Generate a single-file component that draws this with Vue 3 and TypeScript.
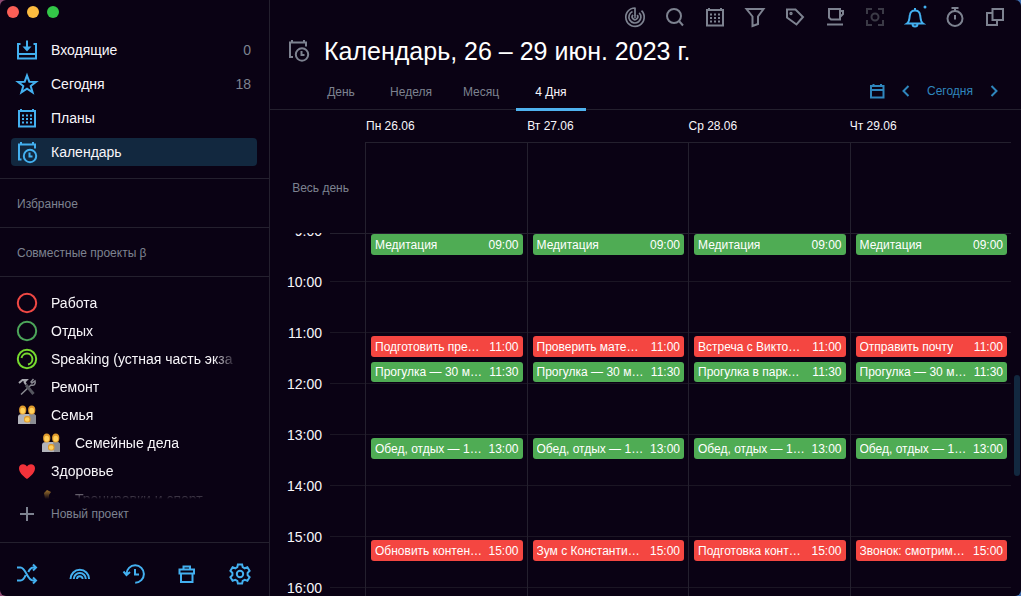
<script setup lang="ts">
import { ref } from 'vue'

interface NavItem { id: string; label: string; count?: string }
interface Project { id: string; label: string; icon: string; nested?: boolean }
interface CalEvent { slot: number; title: string; time: string; tone: 'green' | 'red' }
interface Day { label: string; events: CalEvent[] }

const nav: NavItem[] = [
  { id: 'inbox', label: 'Входящие', count: '0' },
  { id: 'star', label: 'Сегодня', count: '18' },
  { id: 'plans', label: 'Планы' },
  { id: 'clock', label: 'Календарь' },
]
const projects: Project[] = [
  { id: 'work', label: 'Работа', icon: 'ring-red' },
  { id: 'rest', label: 'Отдых', icon: 'ring-green' },
  { id: 'speaking', label: 'Speaking (устная часть экза', icon: 'ring-lime' },
  { id: 'repair', label: 'Ремонт', icon: 'tools' },
  { id: 'family', label: 'Семья', icon: 'family' },
  { id: 'chores', label: 'Семейные дела', icon: 'family', nested: true },
  { id: 'health', label: 'Здоровье', icon: 'heart' },
  { id: 'sport', label: 'Тренировки и спорт', icon: 'arm', nested: true },
]
const tools = ['Фокус', 'Поиск', 'Планы', 'Фильтр', 'Метки', 'Перерыв', 'Обзор', 'Уведомления', 'Таймер', 'Окна']
const footer = ['Случайная задача', 'Радуга', 'История', 'Корзина', 'Настройки']
const tabs = ['День', 'Неделя', 'Месяц', '4 Дня']
const hours = ['9:00', '10:00', '11:00', '12:00', '13:00', '14:00', '15:00', '16:00']
const activeNav = ref('clock')
const activeTab = ref('4 Дня')

function day(label: string, late: string, walk: string, last: string): Day {
  return {
    label,
    events: [
      { slot: 1, title: 'Медитация', time: '09:00', tone: 'green' },
      { slot: 5, title: late, time: '11:00', tone: 'red' },
      { slot: 6, title: walk, time: '11:30', tone: 'green' },
      { slot: 9, title: 'Обед, отдых — 1…', time: '13:00', tone: 'green' },
      { slot: 13, title: last, time: '15:00', tone: 'red' },
    ],
  }
}
const days: Day[] = [
  day('Пн 26.06', 'Подготовить пре…', 'Прогулка — 30 м…', 'Обновить контен…'),
  day('Вт 27.06', 'Проверить мате…', 'Прогулка — 30 м…', 'Зум с Константи…'),
  day('Ср 28.06', 'Встреча с Викто…', 'Прогулка в парк…', 'Подготовка конт…'),
  day('Чт 29.06', 'Отправить почту', 'Прогулка — 30 м…', 'Звонок: смотрим…'),
]
</script>

<template>
  <div class="window">
    <aside class="sidebar">
      <div class="lights">
        <button class="light close" aria-label="Закрыть"></button>
        <button class="light minimize" aria-label="Свернуть"></button>
        <button class="light expand" aria-label="Развернуть"></button>
      </div>

      <nav class="nav">
        <a v-for="item in nav" :key="item.id" href="#" class="nav-item" :class="{ active: item.id === activeNav }" @click.prevent="activeNav = item.id">
          <svg class="icon" viewBox="0 0 22 22">
            <g v-if="item.id === 'inbox'">
              <path d="M4.500 5H2v14.500h18V5h-2.500M2 15h18M11 1.500v9" />
              <path class="solid" d="M6.500 7.500h9L11 12.500z" />
            </g>
            <path v-else-if="item.id === 'star'" d="m11 2.500 2.300 6.200 6.700.2-5.300 4.100 1.900 6.400L11 15.600l-5.600 3.800 1.900-6.400L2 8.900l6.700-.2z" />
            <g v-else-if="item.id === 'plans'">
              <path d="M3 4h16v15.500H3zM5 2V4M17 2V4" />
              <path class="dots" d="M6 8.500h10.500M6 12h10.500M6 15.500h10.500" />
            </g>
            <g v-else>
              <path d="M5.500 18.500H3V3.500h16v4M5 1V3.500M17 1V3.500" />
              <circle cx="14" cy="15" r="6.200" />
              <path d="M13.500 11.500v4h3" />
            </g>
          </svg>
          <span class="nav-label">{{ item.label }}</span>
          <span v-if="item.count" class="count">{{ item.count }}</span>
        </a>
      </nav>

      <section class="group">Избранное</section>
      <section class="group">Совместные проекты β</section>

      <div class="projects">
        <a v-for="p in projects" :key="p.id" href="#" class="project" :class="{ nested: p.nested }">
          <svg class="icon" viewBox="0 0 22 22">
            <circle v-if="p.icon === 'ring-red'" cx="11" cy="11" r="9.200" stroke="#f04844" />
            <circle v-else-if="p.icon === 'ring-green'" cx="11" cy="11" r="9.200" stroke="#4ca55a" />
            <g v-else-if="p.icon === 'ring-lime'" stroke="#76d92f">
              <circle cx="11" cy="11" r="9.200" />
              <path d="M5.500 10A5.500 5.500 0 1 1 12 16.400" />
            </g>
            <g v-else-if="p.icon === 'tools'">
              <path d="m17.500 3-2.500 3 1 1 3-2c1 3-1 5-4 4L5 18.500" stroke="#8a8b93" stroke-width="1.500" />
              <path d="m10 9 7.500 9" stroke="#55565f" stroke-width="3" />
              <path d="m3 7 3.500-3L10.500 4 8.500 6 10 8.500" stroke="#a8a9b0" />
            </g>
            <g v-else-if="p.icon === 'family'" stroke="none">
              <path d="M2 20v-7q0-3 4-3h10q4 0 4 3v7z" fill="#b2b4ba" />
              <path d="M13 10h4q3 0 3 3v7h-6z" fill="#8b8d93" />
              <ellipse cx="6.700" cy="6" rx="3.600" ry="4.500" fill="#e09a2c" />
              <ellipse cx="15.700" cy="6" rx="3.600" ry="4.500" fill="#e09a2c" />
              <ellipse cx="6.700" cy="6.700" rx="2.400" ry="3" fill="#ffd05a" />
              <ellipse cx="15.700" cy="6.700" rx="2.400" ry="3" fill="#ffd05a" />
              <rect x="8" y="12" width="6.500" height="6.500" rx="2.500" fill="#e09a2c" />
              <circle cx="11.200" cy="15.500" r="2.300" fill="#ffd05a" />
            </g>
            <path v-else-if="p.icon === 'heart'" d="M11 19C6 15.500 3 12 3 8c0-4 5.500-5.500 8-1.500C13.500 2.500 19 4 19 8c0 4-3 7.500-8 11z" fill="#f2323a" stroke="none" />
            <path v-else d="M4 5 7 2l4 2-2 3v5q6-4 11 2-5 5-14 3z" fill="#d39a36" stroke="none" />
          </svg>
          <span class="project-label">{{ p.label }}</span>
        </a>
      </div>

      <button class="new-project">
        <svg class="icon" viewBox="0 0 22 22"><path d="M11 4v14M4 11h14" /></svg>
        <span>Новый проект</span>
      </button>

      <footer class="side-footer">
        <button v-for="(name, i) in footer" :key="name" :aria-label="name">
          <svg class="icon" viewBox="0 0 22 22">
            <g v-if="i === 0">
              <path d="M1 4.500h3.500C10 4.500 11 17.500 17 17.500h3M1 17.500h3.500c2.500 0 4-2.500 5.200-5.300M12.300 9C13.500 6.500 15 4.500 17.500 4.500H20" />
              <path d="m17 1.500 3 3-3 3M17 14.500l3 3-3 3" />
            </g>
            <path v-else-if="i === 1" d="M1.500 16a9.300 9.300 0 0 1 18.600 0M4.800 16a6 6 0 0 1 12 0M8 16a2.800 2.800 0 0 1 5.600 0" />
            <path v-else-if="i === 2" d="M3.500 11a8.700 8.700 0 1 1 8.700 8.700M.500 8.500 3.500 12l3.500-3M12 6v5.500h4" />
            <g v-else-if="i === 3">
              <path d="M3.500 6.500h14.500v4h-14.500zM5 10.500V19h11.500v-8.500M7.500 6V3.500h6.500V6" />
            </g>
            <g v-else>
              <circle cx="11" cy="11" r="3.200" />
              <path d="m8.900 1.500-.6 2.700-2 1.100L3.600 4.300 1.400 7.800l2 2v2.400l-2 2 2.200 3.500 2.700-.9 2 1.100.6 2.700h4.200l.6-2.700 2-1.100 2.700.9 2.200-3.500-2-2V9.800l2-2-2.200-3.500-2.700 1-2-1.100-.6-2.700z" />
            </g>
          </svg>
        </button>
      </footer>
    </aside>

    <main class="main">
      <div class="toolbar">
        <button v-for="(name, i) in tools" :key="name" :aria-label="name" :class="{ dim: i === 6, lit: i === 7 }">
          <svg class="icon" viewBox="0 0 22 22">
            <g v-if="i === 0" class="fine">
              <path d="M11 1.500V10M11 2a9.200 9.200 0 1 0 6.500 2.700M8.500 5.500a6 6 0 1 0 6.700 1.300M9 8.800a2.800 2.800 0 1 0 4.200.3" />
              <circle class="solid" cx="11" cy="11" r="1" />
            </g>
            <g v-else-if="i === 1"><circle cx="10" cy="10" r="7" /><path d="m15 15 4 4.500" /></g>
            <g v-else-if="i === 2">
              <path d="M3 4h16v15.500H3zM5 2V4M17 2V4" />
              <path class="dots" d="M6 8.500h10.500M6 12h10.500M6 15.500h10.500" />
            </g>
            <path v-else-if="i === 3" d="M2.500 3h17L14 10.500V18l-5.500 2v-9.500z" />
            <g v-else-if="i === 4"><path d="M3 3.500h8.500L19 11l-6.500 7.500L3 11.500z" /><circle cx="7" cy="7.500" r=".7" /></g>
            <path v-else-if="i === 5" d="M5 3h11v10.500H7L5 11.500zM16 5h3v3l-3 3M3 18.500h16" />
            <g v-else-if="i === 6">
              <path d="M3 8V3h5M14 3h5v5M19 14v5h-5M8 19H3v-5" />
              <circle cx="11" cy="11" r="3.500" />
            </g>
            <g v-else-if="i === 7">
              <path d="M3 17.500c3-2 2-5 3-9 .5-2.500 2-4 5-4s4.500 1.500 5 4c1 4 0 7 3 9zM8.500 18a2.500 2.500 0 0 0 5 0M11 2v2.500" />
              <circle class="alert" cx="21" cy="1" r="1.500" />
            </g>
            <g v-else-if="i === 8"><circle cx="11" cy="12.500" r="7.500" /><path d="M11 9v4.500M7.500 2h7M11 2v3" /></g>
            <path v-else d="M8.500 3H19v11H8.500zM8.500 7H3v12h10v-5" />
          </svg>
        </button>
      </div>

      <header class="heading">
        <svg class="icon" viewBox="0 0 22 22">
          <path d="M5 17H2V2.500h16v4M4 0V2.500M16 0V2.500" />
          <circle cx="14" cy="14.500" r="6.200" />
          <path d="M13.500 11v4h3" />
        </svg>
        <h1>Календарь, 26 – 29 июн. 2023 г.</h1>
      </header>

      <div class="tabbar">
        <div class="tabs" role="tablist">
          <button v-for="t in tabs" :key="t" role="tab" class="tab" :aria-selected="t === activeTab" :class="{ selected: t === activeTab }" @click="activeTab = t">{{ t }}</button>
        </div>
        <div class="pager">
          <button aria-label="Выбрать дату"><svg viewBox="0 0 16 16"><path d="M2 3h12.500v11.500H2zM2 7h12.500M4.500 1v2M12 1v2" /></svg></button>
          <button aria-label="Назад"><svg viewBox="0 0 16 16"><path d="m10.500 3-5 5 5 5" /></svg></button>
          <button class="today">Сегодня</button>
          <button aria-label="Вперёд"><svg viewBox="0 0 16 16"><path d="m5.500 3 5 5-5 5" /></svg></button>
        </div>
      </div>

      <div class="day-head">
        <div v-for="d in days" :key="d.label">{{ d.label }}</div>
      </div>

      <div class="all-day">
        <div class="all-day-label">Весь день</div>
        <div class="all-day-cells">
          <div v-for="d in days" :key="d.label" class="cell"></div>
        </div>
      </div>

      <div class="schedule">
        <div class="hours">
          <div v-for="h in hours" :key="h" class="hour">{{ h }}</div>
        </div>
        <div class="grid">
          <div class="lines"><div v-for="h in hours" :key="h" class="line"></div></div>
          <div class="columns">
            <div v-for="d in days" :key="d.label" class="column">
              <button v-for="e in d.events" :key="e.slot" class="event" :class="e.tone" :style="{ gridRow: e.slot }">
                <span class="event-title">{{ e.title }}</span>
                <span>{{ e.time }}</span>
              </button>
            </div>
          </div>
        </div>
        <div class="scroll-thumb"></div>
      </div>
    </main>
  </div>
</template>

<style>
body {
  background: linear-gradient(to right, #8c4a72, #3f6fb0);
  overflow: hidden;
}
</style>

<style scoped>
* { box-sizing: border-box; }
.window {
  display: flex;
  height: 100vh;
  overflow: hidden;
  border-radius: 6px;
  background: #0a0214;
  color: #f8f6fa;
  font-family: "Liberation Sans", Arial, sans-serif;
  font-size: 14px;
}
button {
  display: flex;
  align-items: center;
  margin: 0;
  padding: 0;
  border: 0;
  background: none;
  color: inherit;
  font: inherit;
}
a { color: inherit; text-decoration: none; }
svg {
  flex: none;
  display: block;
  overflow: visible;
  fill: none;
  stroke: currentColor;
  stroke-width: 2;
}
.icon { width: 22px; height: 22px; }
.dots { stroke-dasharray: 2 2; }
.fine { stroke-width: 1.7; }
.solid { fill: currentColor; stroke: none; }

.sidebar {
  flex: none;
  display: flex;
  flex-direction: column;
  width: 270px;
  border-right: 1px solid #24202e;
}
.lights { display: flex; gap: 8px; padding: 6px 7px 15px; }
.light { width: 12px; height: 12px; border-radius: 50%; }
.close { background: #fb5f57; }
.minimize { background: #fdbc40; }
.expand { background: #33c748; }
.nav { display: flex; flex-direction: column; gap: 6px; padding: 3px 12px 12px 11px; }
.nav-item {
  display: flex;
  align-items: center;
  height: 28px;
  padding: 0 6px 0 5px;
  border-radius: 4px;
}
.nav-item .icon { color: #43b0f0; }
.nav-item.active { background: #12283f; }
.nav-label { flex: 1; margin-left: 13px; }
.count { color: #7d8290; }
.group {
  height: 49px;
  padding: 0 17px;
  border-top: 1px solid #24202e;
  color: #7d8290;
  font-size: 12px;
  line-height: 50px;
}
.projects {
  flex: 1;
  min-height: 0;
  overflow: hidden;
  padding: 12px 32px 0 16px;
  border-top: 1px solid #24202e;
  mask-image: linear-gradient(to top, transparent, #000 12px);
}
.project { display: flex; align-items: center; height: 28px; }
.nested { padding-left: 24px; }
.project-label {
  flex: 1;
  min-width: 0;
  margin-left: 13px;
  overflow: hidden;
  white-space: nowrap;
  line-height: 20px;
  mask-image: linear-gradient(to left, transparent, #000 24px);
}
.new-project {
  height: 30px;
  margin-bottom: 13px;
  padding-left: 16px;
  gap: 13px;
  color: #7d8290;
  font-size: 12px;
}
.side-footer {
  display: flex;
  justify-content: space-between;
  height: 54px;
  padding: 0 18px 0 16px;
  border-top: 1px solid #24202e;
  color: #43b0f0;
}
.side-footer button { padding-top: 8px; }

.main { flex: 1; min-width: 0; display: flex; flex-direction: column; }
.toolbar {
  display: flex;
  justify-content: flex-end;
  gap: 18px;
  height: 34px;
  padding-right: 15px;
  color: #7d8290;
}
.dim { color: #3b3a46; }
.lit { color: #43b0f0; }
.alert { fill: #43b0f0; stroke: none; }
.heading {
  display: flex;
  align-items: center;
  gap: 14px;
  height: 34px;
  padding-left: 18px;
}
.heading .icon { color: #7d8290; }
h1 { margin: 0; color: #fff; font-size: 25px; font-weight: 400; white-space: nowrap; }
.tabbar {
  display: flex;
  justify-content: space-between;
  height: 42px;
  padding: 0 19px 0 36px;
  border-bottom: 1px solid #24202e;
  font-size: 12px;
}
.tabs { display: flex; padding-top: 4px; }
.tab {
  justify-content: center;
  width: 70px;
  height: 39px;
  border-top: 3px solid transparent;
  border-bottom: 3px solid transparent;
  color: #7d8290;
}
.tab.selected { border-bottom-color: #4fb2ee; color: #f8f6fa; }
.pager { display: flex; align-items: center; gap: 13px; padding-top: 4px; color: #2f86bd; }
.pager svg { width: 16px; height: 16px; }
.day-head {
  display: grid;
  grid-template-columns: repeat(4, 1fr);
  height: 32px;
  padding: 0 10px 0 96px;
  font-size: 12px;
  line-height: 32px;
}
.all-day { display: flex; height: 91px; font-size: 12px; }
.all-day-label { width: 95px; padding-right: 16px; color: #7d8290; line-height: 92px; text-align: right; }
.all-day-cells {
  flex: 1;
  display: grid;
  grid-template-columns: repeat(4, 1fr);
  margin-right: 10px;
  border-top: 1px solid #24202e;
}
.cell { border-left: 1px solid #24202e; }
.schedule { flex: 1; min-height: 0; display: flex; overflow: hidden; }
.hours { width: 60px; margin-top: -28px; }
.hour { height: 51px; padding-right: 8px; line-height: 52px; text-align: right; }
.grid { flex: 1; display: grid; border-top: 1px solid #24202e; }
.lines, .columns { grid-area: 1 / 1; margin-top: -4px; }
.line { height: 51px; border-top: 1px solid #1b1624; }
.columns { display: grid; grid-template-columns: repeat(4, 1fr); margin-left: 35px; }
.column {
  display: grid;
  grid-template-columns: minmax(0, 1fr);
  grid-template-rows: repeat(8, 26px 25px);
  border-left: 1px solid #24202e;
}
.event {
  justify-content: space-between;
  margin: 4px 4px 1px 5px;
  padding: 0 4px;
  border-radius: 3px;
  color: #fff;
  font-size: 12px;
  white-space: nowrap;
}
.event-title { min-width: 0; overflow: hidden; }
.green { background: #4fac54; }
.red { background: #f44641; }
.scroll-thumb { width: 6px; height: 101px; margin: 142px 1px 0 3px; border-radius: 3px; background: #12283f; }
</style>
